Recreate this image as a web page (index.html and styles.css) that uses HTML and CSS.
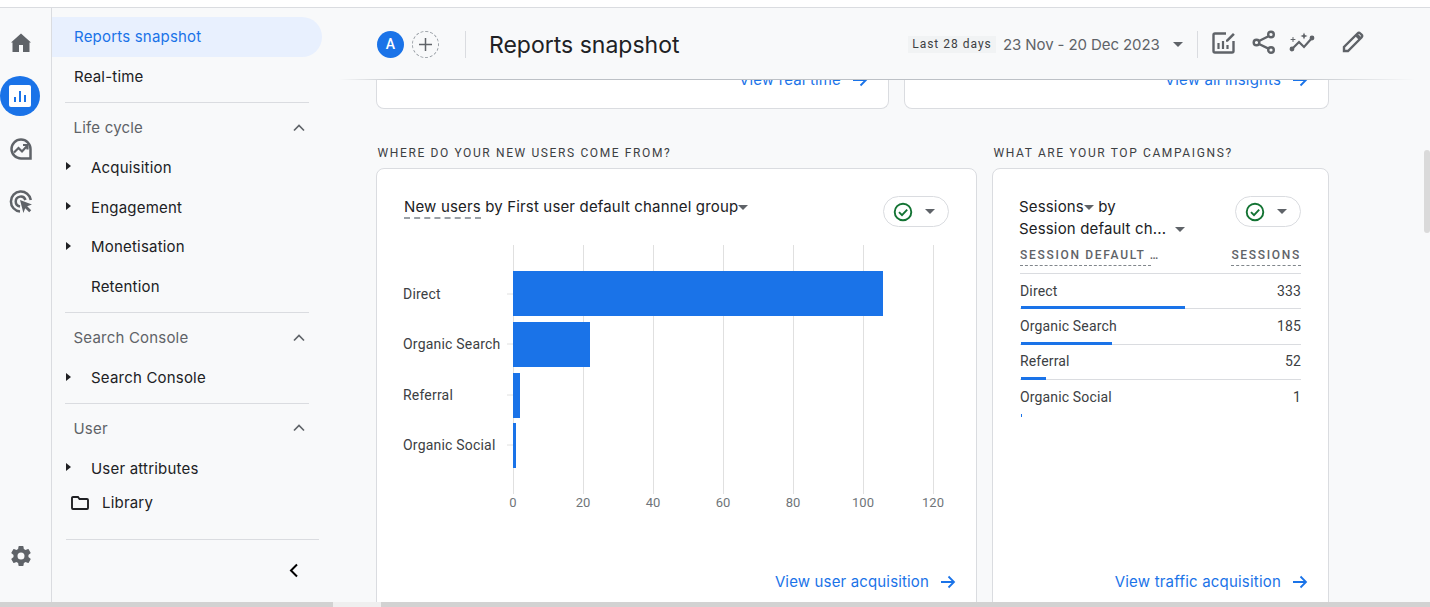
FILE: index.html
```html
<!DOCTYPE html>
<html>
<head>
<meta charset="utf-8">
<title>Reports snapshot</title>
<link rel="stylesheet" href="styles.css">
</head>
<body>

<div class="topstrip"></div>

<div class="app">

<nav class="rail">
  <svg class="rail-icon" viewBox="0 0 24 24"><path fill="#5f6368" d="M10 21v-7h4v7h6.500v-9.500h1.500L12 2.500 2 11.500h1.500V21z"/></svg>
  <div class="rail-active">
    <svg width="22" height="22" viewBox="0 0 22 22"><rect x="0" y="0" width="22" height="22" rx="2" fill="#fff"/><path d="M6 12v5M11 6v11M16 10v7" stroke="#1a73e8" stroke-width="2"/></svg>
  </div>
  <svg class="rail-icon" viewBox="0 0 24 24" fill="none" stroke="#5f6368" stroke-width="2.500"><path d="M21.500 21.500H12A9.500 9.500 0 1 1 21.500 12z"/><path d="M5 15.500l4.500-4.500 3.500 3.500 5-5.500M14 8h4.500v4.500" stroke-width="2.200"/></svg>
  <svg class="rail-icon" viewBox="0 0 24 24" fill="none" stroke="#5f6368" stroke-width="2.500"><path d="M11 21.500A10 10 0 1 1 21.800 10"/><path d="M11 16.500A5 5 0 1 1 16.500 10"/><path d="M11 10l12 4.500-4.800 1.800 4 4-2 2-4-4-1.800 4.800z" fill="#5f6368" stroke="none"/></svg>
  <svg class="rail-icon rail-gear" viewBox="0 0 24 24"><path fill="#5f6368" d="M19.400 13c.05-.33.100-.66.100-1s-.05-.67-.1-1l2.100-1.650a.5.500 0 0 0 .12-.64l-2-3.460a.5.500 0 0 0-.61-.22l-2.490 1a7.300 7.300 0 0 0-1.690-.98l-.38-2.650A.49.490 0 0 0 14 2h-4a.49.490 0 0 0-.49.420l-.38 2.650c-.61.250-1.170.59-1.690.98l-2.490-1a.5.500 0 0 0-.61.220l-2 3.460a.49.490 0 0 0 .12.640L4.570 11c-.05.330-.1.670-.1 1s.05.670.1 1l-2.110 1.650a.5.500 0 0 0-.12.640l2 3.460c.12.220.39.300.61.220l2.490-1c.52.400 1.080.73 1.690.98l.38 2.650c.05.240.24.420.49.420h4c.25 0 .46-.18.490-.42l.38-2.650c.61-.25 1.170-.59 1.690-.98l2.490 1c.23.090.49 0 .61-.22l2-3.460a.5.500 0 0 0-.12-.64zM12 15.500a3.500 3.500 0 1 1 0-7 3.500 3.500 0 0 1 0 7z"/></svg>
</nav>

<aside class="sidebar">
  <a class="nav-top active">Reports snapshot</a>
  <a class="nav-top">Real-time</a>
  <div class="divider"></div>

  <div class="group-head"><span>Life cycle</span><svg class="chev" viewBox="0 0 12 8"><path d="M1 6.500l5-5 5 5" fill="none" stroke="#5f6368" stroke-width="1.700"/></svg></div>
  <a class="nav-item"><i class="tri"></i>Acquisition</a>
  <a class="nav-item"><i class="tri"></i>Engagement</a>
  <a class="nav-item"><i class="tri"></i>Monetisation</a>
  <a class="nav-item"><i class="tri tri-none"></i>Retention</a>
  <div class="divider"></div>

  <div class="group-head"><span>Search Console</span><svg class="chev" viewBox="0 0 12 8"><path d="M1 6.500l5-5 5 5" fill="none" stroke="#5f6368" stroke-width="1.700"/></svg></div>
  <a class="nav-item"><i class="tri"></i>Search Console</a>
  <div class="divider"></div>

  <div class="group-head"><span>User</span><svg class="chev" viewBox="0 0 12 8"><path d="M1 6.500l5-5 5 5" fill="none" stroke="#5f6368" stroke-width="1.700"/></svg></div>
  <a class="nav-item"><i class="tri"></i>User attributes</a>
  <a class="nav-library"><svg width="18" height="14" viewBox="0 0 18 14"><path d="M1 3V2a1 1 0 0 1 1-1h5l1.500 2H16a1 1 0 0 1 1 1v8a1 1 0 0 1-1 1H2a1 1 0 0 1-1-1z" fill="none" stroke="#202124" stroke-width="1.900"/></svg>Library</a>

  <div class="divider-wide"></div>
  <div class="collapse"><svg width="11" height="15" viewBox="0 0 11 15"><path d="M9 1.500L3 7.500l6 6" fill="none" stroke="#000" stroke-width="2"/></svg></div>
</aside>

<main class="main">
  <header class="head">
    <span class="avatar">A</span>
    <span class="add"><svg width="15" height="15" viewBox="0 0 15 15"><path d="M7.500 1v13M1 7.500h13" stroke="#5f6368" stroke-width="1.500"/></svg></span>
    <span class="vline vline-a"></span>
    <h1>Reports snapshot</h1>
    <span class="chip">Last 28 days</span>
    <span class="dates">23 Nov - 20 Dec 2023</span>
    <i class="caret caret-date"></i>
    <span class="vline vline-b"></span>
    <svg class="tool tool-a" width="24" height="24" viewBox="0 0 24 24" fill="none" stroke="#5f6368"><path d="M14 3.500H3a1.500 1.500 0 0 0-1.500 1.500v16A1.500 1.500 0 0 0 3 22.500h17a1.500 1.500 0 0 0 1.500-1.500V11" stroke-width="2.400"/><path d="M6.500 19v-6M11 19v-8M15.500 19v-4" stroke-width="2.200"/><path d="M14 10l7-7 1.800 1.800-7 7H14z" fill="#5f6368" stroke="none"/></svg>
    <svg class="tool tool-b" width="24" height="24" viewBox="0 0 24 24" fill="none" stroke="#5f6368" stroke-width="2.400"><circle cx="19" cy="4.500" r="2.800"/><circle cx="4.500" cy="12.500" r="2.800"/><circle cx="19" cy="20" r="2.800"/><path d="M7 11l10-5M7 14l10 4.800"/></svg>
    <svg class="tool tool-c" width="26" height="24" viewBox="0 0 26 24" fill="none" stroke="#5f6368" stroke-width="2.200" stroke-linecap="round"><path d="M3 19l7-7 5 5 8-9"/><circle cx="3" cy="19" r="1.300" fill="#5f6368"/><circle cx="23" cy="8" r="1.300" fill="#5f6368"/><path d="M15 2.500l1 2.500 2.500 1-2.500 1-1 2.500-1-2.500-2.500-1 2.500-1z" fill="#5f6368" stroke="none"/><path d="M4 7.500v4M2 9.500h4" stroke-width="1"/></svg>
    <svg class="tool tool-d" width="24" height="24" viewBox="0 0 24 24" fill="none" stroke="#5f6368" stroke-width="2.400"><path d="M3 21v-4L16.500 3.500a2 2 0 0 1 2.800 0l1.200 1.200a2 2 0 0 1 0 2.800L7 21z"/><path d="M15.500 5l3.500 3.500" stroke-width="3.500"/></svg>
  </header>

  <div class="content">
    <div class="row-top">
      <div class="card-top card-top-a"><a class="link">View real time <svg class="arrow" viewBox="0 0 16 16"><path d="M1 8h13M8.500 2.500L14 8l-5.500 5.500" fill="none" stroke="#1a73e8" stroke-width="1.800"/></svg></a></div>
      <div class="card-top card-top-b"><a class="link">View all insights <svg class="arrow" viewBox="0 0 16 16"><path d="M1 8h13M8.500 2.500L14 8l-5.500 5.500" fill="none" stroke="#1a73e8" stroke-width="1.800"/></svg></a></div>
    </div>

    <div class="row-cards">
      <section class="col col-a">
        <h2>WHERE DO YOUR NEW USERS COME FROM?</h2>
        <div class="card">
          <div class="card-head">
            <div class="card-title"><span class="dashed">New users</span> by First user default channel group<i class="caret"></i></div>
            <div class="pill"><svg width="20" height="20" viewBox="0 0 20 20" fill="none" stroke="#137333" stroke-width="1.900"><circle cx="10" cy="10" r="8.300"/><path d="M6 10.200l3 3 5.200-5.500"/></svg><i class="caret"></i></div>
          </div>
          <svg class="chart" width="570" height="280" viewBox="0 0 570 280">
            <g stroke="#e0e0e0" stroke-width="1">
              <path d="M123.500 5v249M193.500 5v249M263.500 5v249M333.500 5v249M403.500 5v249M473.500 5v249M543.500 5v249"/>
              <path d="M117 54h6M117 104h6M117 155h6M117 205h6"/>
            </g>
            <g fill="#1a73e8">
              <rect x="123" y="31" width="370" height="45"/>
              <rect x="123" y="82" width="77" height="45"/>
              <rect x="123" y="133" width="7" height="45"/>
              <rect x="123" y="183" width="3" height="45"/>
            </g>
            <g class="chart-label">
              <text x="13" y="59">Direct</text>
              <text x="13" y="109">Organic Search</text>
              <text x="13" y="160">Referral</text>
              <text x="13" y="210">Organic Social</text>
            </g>
            <g class="chart-tick" text-anchor="middle">
              <text x="123" y="267">0</text>
              <text x="193" y="267">20</text>
              <text x="263" y="267">40</text>
              <text x="333" y="267">60</text>
              <text x="403" y="267">80</text>
              <text x="473" y="267">100</text>
              <text x="543" y="267">120</text>
            </g>
          </svg>
          <a class="link link-card">View user acquisition <svg class="arrow" viewBox="0 0 16 16"><path d="M1 8h13M8.500 2.500L14 8l-5.500 5.500" fill="none" stroke="#1a73e8" stroke-width="1.800"/></svg></a>
        </div>
      </section>

      <section class="col col-b">
        <h2>WHAT ARE YOUR TOP CAMPAIGNS?</h2>
        <div class="card">
          <div class="card-head card-head-b">
            <div class="card-title card-title-b">Sessions<i class="caret"></i> by<br>Session default ch... <i class="caret caret-gap"></i></div>
            <div class="pill"><svg width="20" height="20" viewBox="0 0 20 20" fill="none" stroke="#137333" stroke-width="1.900"><circle cx="10" cy="10" r="8.300"/><path d="M6 10.200l3 3 5.200-5.500"/></svg><i class="caret"></i></div>
          </div>
          <div class="tbl">
            <div class="tbl-head"><span class="th th-wide">SESSION DEFAULT …</span><span class="th">SESSIONS</span></div>
            <div class="tr"><div class="tr-text"><span>Direct</span><span>333</span></div><div class="tr-bar" style="width:164px"></div></div>
            <div class="tr"><div class="tr-text"><span>Organic Search</span><span>185</span></div><div class="tr-bar" style="width:91px"></div></div>
            <div class="tr"><div class="tr-text"><span>Referral</span><span>52</span></div><div class="tr-bar" style="width:25px"></div></div>
            <div class="tr tr-last"><div class="tr-text"><span>Organic Social</span><span>1</span></div><div class="tr-bar" style="width:1px"></div></div>
          </div>
          <a class="link link-card link-card-b">View traffic acquisition <svg class="arrow" viewBox="0 0 16 16"><path d="M1 8h13M8.500 2.500L14 8l-5.500 5.500" fill="none" stroke="#1a73e8" stroke-width="1.800"/></svg></a>
        </div>
      </section>
    </div>
  </div>

  <div class="vthumb"></div>
</main>
</div>

<div class="hbar"><div class="hbar-a"></div><div class="hbar-gap"></div><div class="hbar-b"></div></div>

</body>
</html>
```

FILE: styles.css
```css
html, body { margin: 0; height: 100%; overflow: hidden; }
body { background: #f8f9fa; color: #202124; font-family: "Roboto", "Liberation Sans", sans-serif; font-size: 15px; }

.topstrip { height: 7px; background: #fff; border-bottom: 1px solid #dadce0; }
.app { display: flex; height: 594px; }

/* icon rail */
.rail { width: 42px; height: 100%; padding-right: 9px; border-right: 1px solid #dadce0; display: flex; flex-direction: column; align-items: center; flex: none; }
.rail-icon { width: 24px; height: 24px; margin-top: 29px; flex: none; }
.rail-icon:first-child { margin-top: 23px; }
.rail-active { width: 40px; height: 40px; border-radius: 50%; background: #1a73e8; display: flex; align-items: center; justify-content: center; margin: 21px 0 -8px -2px; flex: none; }
.rail-gear { margin-top: auto; margin-bottom: 34px; }

/* side menu */
.sidebar { width: 281px; flex: none; padding-top: 9px; font-family: "Inter", "Roboto", sans-serif; font-size: 15px; letter-spacing: .2px; }
.sidebar a { display: flex; align-items: center; color: #202124; }
.nav-top { height: 40px; width: 270px; padding: 0 0 1px 22px; box-sizing: border-box; border-radius: 0 20px 20px 0; }
.sidebar a.active { background: #e8f0fe; color: #1a73e8; }
.divider { height: 1px; background: #dadce0; margin: 5px 23px 0 13px; width: 244px; }
.group-head { height: 40px; margin-top: 5px; padding: 0 17px 1px 21.500px; width: 270px; box-sizing: border-box; display: flex; align-items: center; justify-content: space-between; color: #5f6368; }
.chev { width: 12px; height: 8px; }
.nav-item { height: 39.800px; padding-left: 14px; box-sizing: border-box; padding-bottom: 1px; }
.tri { width: 0; height: 0; border-left: 5px solid #202124; border-top: 4px solid transparent; border-bottom: 4px solid transparent; margin-right: 20px; margin-top: -2px; }
.tri-none { border-left-color: transparent; }
.nav-library { height: 29px; padding-left: 19px; gap: 13px; padding-bottom: 1px; box-sizing: border-box; }
.divider-wide { height: 1px; background: #dadce0; width: 253px; margin: 21px 0 0 14px; }
.collapse { display: flex; justify-content: flex-end; padding: 23px 34px 0 0; }

/* main column */
.main { position: relative; flex: 1; min-width: 0; overflow: hidden; }
.head { position: absolute; left: 0; top: 0; right: 0; height: 72px; background: #f8f9fa; z-index: 2; display: flex; align-items: center; padding-left: 44px; box-sizing: border-box; }
.head::after { content: ""; position: absolute; left: 6px; right: 15px; bottom: 0; height: 1px; background: linear-gradient(to right, transparent, #bdc1c6 6%, #bdc1c6 88%, transparent); }
.avatar { width: 27px; height: 27px; border-radius: 50%; background: #1a73e8; color: #fff; font-size: 14px; font-weight: 500; display: flex; align-items: center; justify-content: center; }
.add { width: 25px; height: 25px; border: 1px dashed #9aa0a6; border-radius: 50%; display: flex; align-items: center; justify-content: center; margin-left: 8px; }
.vline { width: 1px; height: 27px; background: #dadce0; flex: none; }
.vline-a { margin-left: 26px; }
.vline-b { margin-left: 14px; }
h1 { margin: 2px 0 0 23px; font-family: "Inter", "Roboto", sans-serif; font-weight: 400; font-size: 23px; width: 419px; flex: none; color: #202124; }
.chip { background: #f1f3f4; color: #3c4043; font-size: 12px; letter-spacing: 1px; height: 17px; line-height: 17px; width: 88px; text-align: center; flex: none; white-space: nowrap; }
.dates { margin-left: 7px; color: #5f6368; font-family: "Inter", "Roboto", sans-serif; font-size: 15px; letter-spacing: -.1px; width: 156px; white-space: nowrap; flex: none; }
.caret { display: inline-block; width: 0; height: 0; border-left: 5px solid transparent; border-right: 5px solid transparent; border-top: 5px solid #5f6368; vertical-align: middle; }
.caret-date { margin-left: 14px; }
.tool { flex: none; margin-top: -4px; }
.tool-a { margin-left: 14px; }
.tool-b { margin-left: 16px; }
.tool-c { margin-left: 13px; }
.tool-d { margin-left: 26px; }

.content { padding-left: 43px; width: 953px; }
.row-top { display: flex; gap: 15px; height: 101px; }
.card-top { background: #fff; border: 1px solid #dadce0; border-top: 0; border-radius: 0 0 8px 8px; box-sizing: border-box; height: 101px; display: flex; align-items: flex-end; justify-content: flex-end; padding: 0 20px 19px 0; }
.card-top-a { width: 513px; }
.card-top-b { width: 425px; }
.link { display: inline-flex; align-items: center; gap: 11px; color: #1a73e8; font-family: "Inter", "Roboto", sans-serif; font-size: 15px; letter-spacing: .15px; white-space: nowrap; }
.arrow { width: 16px; height: 16px; }

.row-cards { display: flex; gap: 15px; margin-top: 35px; }
.col-a { width: 601px; flex: none; }
.col-b { width: 337px; flex: none; }
h2 { margin: 1px 0 7px 1.500px; font-size: 12px; font-weight: 400; letter-spacing: 1.620px; color: #3c4043; line-height: 16px; white-space: nowrap; }
.card { background: #fff; border: 1px solid #dadce0; border-radius: 8px; box-sizing: border-box; height: 450px; display: flex; flex-direction: column; }
.card-head { display: flex; justify-content: space-between; padding: 27px 27px 0 27px; height: 60px; box-sizing: border-box; }
.card-title { font-family: "Inter", "Roboto", sans-serif; font-size: 15px; letter-spacing: .16px; line-height: 22px; color: #202124; white-space: nowrap; }
.card-title-b { margin-left: -1px; }
.dashed { border-bottom: 2px dashed #9aa0a6; padding-bottom: 1px; }
.pill { width: 66px; height: 31px; border: 1px solid #dadce0; border-radius: 16px; box-sizing: border-box; display: flex; align-items: center; justify-content: space-between; padding: 0 13px 0 9px; background: #fff; }
.card-head-b { height: 71px; }
.caret-gap { margin-left: 4px; }

.chart { display: block; margin: 11px 0 0 13px; flex: none; }
.chart-label text { font-family: "Roboto", sans-serif; font-size: 14px; letter-spacing: .2px; fill: #3c4043; }
.chart-tick text { font-family: "Roboto", sans-serif; font-size: 13px; fill: #70757a; }

.link-card { margin-top: auto; align-self: flex-end; padding: 0 20px 26px 0; }
.link-card-b { letter-spacing: .2px; }

/* table on the right card */
.tbl { padding: 0 27px; margin-top: 3px; font-size: 14px; letter-spacing: .15px; color: #3c4043; }
.tbl-head { display: flex; justify-content: space-between; height: 31px; padding-top: 4px; border-bottom: 1px solid #dadce0; box-sizing: border-box; }
.th { font-size: 12px; font-weight: 500; letter-spacing: 1.700px; color: #5f6368; height: 19px; line-height: 16px; box-sizing: border-box; border-bottom: 1px dashed #80868b; white-space: nowrap; }
.th-wide { width: 131px; }
.tr { height: 35.400px; border-bottom: 1px solid #dadce0; box-sizing: border-box; display: flex; flex-direction: column; }
.tr-last { border-bottom: 0; }
.tr-text { display: flex; justify-content: space-between; flex: 1; align-items: center; padding-top: 1px; }
.tr-bar { height: 3px; background: #1a73e8; margin: 0 0 -1px 1px; flex: none; }

.vthumb { position: absolute; right: 0; top: 142px; width: 6px; height: 83px; background: #dadada; border-radius: 3px; z-index: 3; }

.hbar { display: flex; height: 5px; }
.hbar-a { width: 333px; background: #d2d2d2; }
.hbar-gap { width: 48px; background: #efefef; }
.hbar-b { flex: 1; background: #d2d2d2; }
```
